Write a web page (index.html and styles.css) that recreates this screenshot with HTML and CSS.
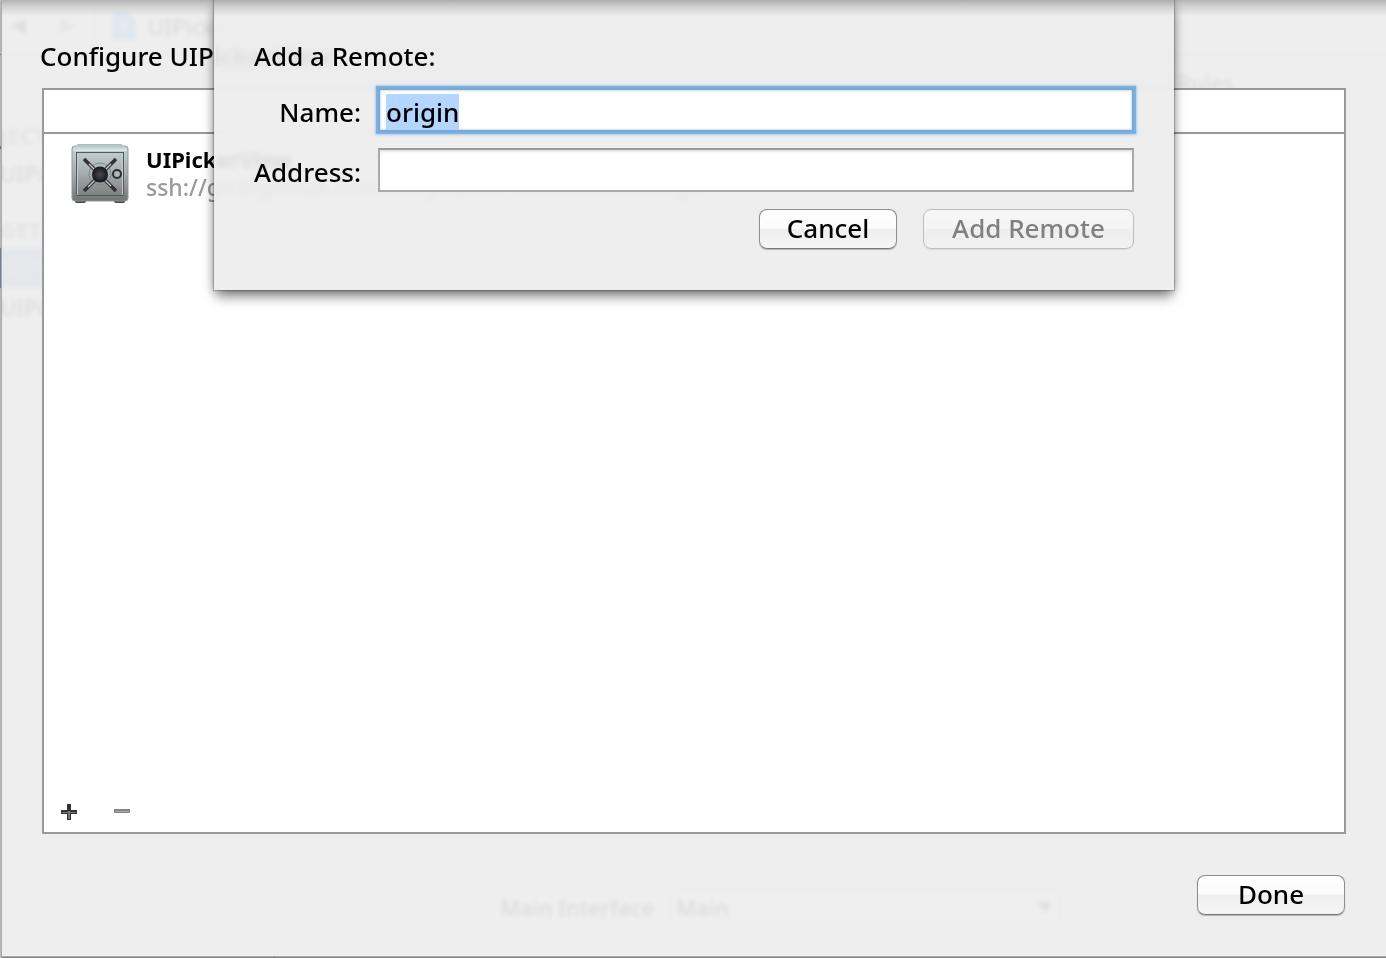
FILE: index.html
```html
<!DOCTYPE html>
<html lang="en">
<head>
<meta charset="utf-8">
<title>Configure UIPickerView</title>
<link rel="stylesheet" href="styles.css">
</head>
<body>
<div class="workspace" inert>
  <div class="toolbar">
    <span class="arrow back"></span>
    <span class="arrow forward"></span>
    <span class="divider"></span>
    <svg class="doc" viewBox="0 0 24 28" aria-hidden="true"><path fill="#4aa0f0" d="M0 0h15l9 9v19H0z"/><path fill="#d8ecff" d="M7 20l5-12 5 12h-2l-3-7-3 7z"/></svg>
    <span class="crumb">UIPicke</span>
  </div>
  <div class="panes">
    <div class="sidebar">
      <div class="group">JECT</div>
      <div class="entry">UIPi</div>
      <div class="group second">GETS</div>
      <div class="entry selected">UIPi</div>
      <div class="entry">UIPi</div>
    </div>
    <div class="editor">
      <div class="tabs">Rules</div>
      <div class="setting">
        <label for="main-interface">Main Interface</label>
        <div class="combo"><select id="main-interface"><option>Main</option></select></div>
      </div>
    </div>
  </div>
</div>

<main class="sheet">
  <h1 class="heading">Configure UIPickerView</h1>
  <section class="list">
    <div class="list-head"></div>
    <div class="repo">
      <svg class="safe" viewBox="0 0 60 62" aria-hidden="true">
        <defs>
          <linearGradient id="body" x1="0" y1="0" x2="0" y2="1"><stop offset="0" stop-color="#c6d6da"/><stop offset=".5" stop-color="#a5adaf"/><stop offset="1" stop-color="#737373"/></linearGradient>
          <linearGradient id="lid" x1="0" y1="0" x2="0" y2="1"><stop offset="0" stop-color="#a8b9bd"/><stop offset="1" stop-color="#dcebee"/></linearGradient>
          <radialGradient id="hub"><stop offset="0" stop-color="#4a4a55"/><stop offset="1" stop-color="#15151b"/></radialGradient>
        </defs>
        <path fill="#444" d="M5 56h11v2q0 2-3 2H8q-3 0-3-2zM44 56h11v2q0 2-3 2h-5q-3 0-3-2z"/>
        <rect x="2" y="3" width="56" height="55" rx="3" fill="url(#body)" stroke="#8f9799"/>
        <path fill="url(#lid)" d="M8 1h43l6 4v3H3V5z"/>
        <rect x="7.500" y="10.500" width="45" height="42" fill="none" stroke="#c4cacb"/>
        <rect x="6.500" y="9.500" width="47" height="43" fill="none" stroke="#54595a"/>
        <circle cx="30" cy="31" r="11" fill="none" stroke="#7f8690"/>
        <path d="M14 16l32 32M46 16L14 48" stroke="#303236" stroke-width="3.600"/>
        <path d="M19 21l22 22M41 21L18 44" stroke="#c6cacc" stroke-width="1.400"/>
        <circle cx="30" cy="31.500" r="8" fill="url(#hub)"/>
        <circle cx="47" cy="31" r="4" fill="#a9b8b8" stroke="#2c3030" stroke-width="2"/>
      </svg>
      <div class="repo-text">
        <div class="repo-name">UIPickerView</div>
        <div class="repo-url">ssh://git@github.com/lexgod/UIPickerView-test.git</div>
      </div>
    </div>
    <div class="list-foot">
      <button class="tool" type="button" aria-label="Add"><svg viewBox="0 0 16 16"><path fill="#333" d="M6 0h4v6h6v4h-6v6H6v-6H0V6h6z"/><path fill="#777" d="M7 7h2v8H7zM1 8h14v1H1z"/></svg></button>
      <button class="tool" type="button" aria-label="Remove"><svg viewBox="0 0 16 16"><path fill="#858585" d="M0 5h16v4H0z"/><path fill="#a8a8a8" d="M1 7h14v1H1z"/></svg></button>
    </div>
  </section>
  <div class="sheet-foot"><button class="btn done" type="button">Done</button></div>
</main>

<div class="dialog-layer">
  <form class="dialog" role="dialog" aria-labelledby="dialog-title">
    <h2 class="heading" id="dialog-title">Add a Remote:</h2>
    <div class="fields">
      <label for="remote-name">Name:</label>
      <input class="focused" id="remote-name" type="text" value="origin" autocomplete="off" spellcheck="false">
      <label for="remote-address">Address:</label>
      <input id="remote-address" type="text" autocomplete="off">
    </div>
    <div class="actions">
      <button class="btn cancel" type="button">Cancel</button>
      <button class="btn add" type="submit" disabled>Add Remote</button>
    </div>
  </form>
</div>
<script src="app.js"></script>
</body>
</html>
```
FILE: styles.css
```css
* { box-sizing: border-box; }

body {
  margin: 0;
  height: 100vh;
  position: relative;
  overflow: hidden;
  background: #e8e8e8;
  color: #000;
  font-family: "Noto Sans", "Open Sans", sans-serif;
  font-size: 26px;
  font-weight: 500;
  line-height: 34px;
}

button, input, select { font: inherit; color: inherit; }

/* Project window behind the sheets */
.workspace {
  height: 100%;
  display: flex;
  flex-direction: column;
  font-size: 22px;
  color: #222;
}

.toolbar {
  height: 55px;
  flex: none;
  display: flex;
  align-items: center;
  padding: 0 0 2px 10px;
  border-bottom: 1px solid #888;
}

.arrow { border: 8px solid transparent; }
.back { border-right: 16px solid #444; border-left: 0; margin-right: 34px; }
.forward { border-left: 16px solid #999; border-right: 0; margin-right: 18px; }
.divider { width: 2px; height: 40px; margin-right: 16px; background: #bbb; }
.doc { width: 24px; height: 28px; margin-right: 12px; }
.panes { flex: 1; display: flex; }

.sidebar {
  width: 275px;
  padding-top: 61px;
  border-right: 1px solid #bbb;
  line-height: 38px;
  overflow: hidden;
}

.group { font-weight: bold; color: #777; }
.group.second { margin-top: 16px; }
.entry { height: 40px; }
.entry.selected { background: #7f93bd; color: #9cacd0; }
.editor { flex: 1; display: flex; flex-direction: column; justify-content: space-between; }

.tabs {
  height: 58px;
  padding: 10px 152px 0 0;
  border-bottom: 1px solid #bbb;
  text-align: right;
}

.setting {
  display: flex;
  align-items: center;
  gap: 16px;
  padding: 0 0 34px 225px;
}

.combo { position: relative; width: 390px; }

.combo select {
  width: 100%;
  height: 34px;
  padding: 0 4px;
  appearance: none;
  border: 2px solid #bbb;
  background: #eee;
  line-height: 28px;
}

.combo::after {
  content: "";
  position: absolute;
  right: 8px;
  top: 12px;
  border: 7px solid transparent;
  border-top: 11px solid #444;
  border-bottom: 0;
}

/* Main sheet */
.sheet {
  position: absolute;
  inset: 0 0 2px 2px;
  display: flex;
  flex-direction: column;
  padding: 39px 41px 41px 40px;
  background: rgba(238, 238, 238, .91);
  backdrop-filter: blur(2px);
  box-shadow: 0 0 0 1px #aaa, 0 1px 2px 1px #555;
}

.sheet::before, .dialog::before {
  content: "";
  position: absolute;
  inset: 0 0 auto;
  height: 16px;
  background: linear-gradient(rgba(0, 0, 0, .25), rgba(0, 0, 0, .12) 40%, transparent);
}

.heading { margin: 0; font-size: 26px; line-height: 34px; font-weight: 500; }
.sheet > .heading { margin-left: -2px; }

.list {
  flex: 1;
  margin: 15px -1px 0 0;
  display: flex;
  flex-direction: column;
  background: #fff;
  border: 2px solid #999;
}

.list-head { height: 44px; border-bottom: 2px solid #999; }
.repo { flex: 1; display: flex; gap: 16px; padding: 9px 26px; }
.safe { width: 60px; height: 62px; }
.repo-text { padding-top: 2px; line-height: 28px; }
.repo-name { font-size: 22px; font-weight: bold; }
.repo-url { font-size: 23px; color: #999; }
.list-foot { display: flex; gap: 37px; padding: 0 17px 12px; }

.tool { display: block; padding: 0; border: 0; background: none; }
.tool svg { display: block; width: 16px; height: 16px; }

.sheet-foot { display: flex; justify-content: flex-end; margin-top: 41px; }

.btn {
  height: 40px;
  padding: 0 0 2px;
  border: 1px solid #8e8e8e;
  border-bottom-color: #777;
  border-radius: 8px;
  background: linear-gradient(#fff, #fbfbfb 48%, #efefef 50%, #f5f5f5);
  box-shadow: 0 1px 1px rgba(0, 0, 0, .25);
}

.btn:disabled {
  border-color: #bdbdbd;
  background: linear-gradient(#f7f7f7, #f4f4f4 48%, #eee 50%, #f1f1f1);
  box-shadow: 0 1px 1px rgba(0, 0, 0, .08);
  color: #808080;
}

.done { width: 148px; }

/* Remote dialog */
.dialog-layer {
  position: absolute;
  inset: 0 0 auto 2px;
  display: flex;
  justify-content: center;
}

.dialog {
  position: relative;
  width: 960px;
  padding: 39px 40px 41px;
  background: rgba(237, 237, 237, .92);
  backdrop-filter: blur(3px);
  box-shadow: 0 0 1px 1px rgba(0, 0, 0, .2), 0 0 10px rgba(0, 0, 0, .2), 0 8px 12px -2px rgba(0, 0, 0, .5);
}

.fields {
  display: grid;
  grid-template-columns: 107px 1fr;
  gap: 16px 17px;
  margin-top: 15px;
}

.fields label {
  display: flex;
  justify-content: flex-end;
  line-height: 48px;
  height: 44px;
  white-space: nowrap;
}

.fields input {
  width: 100%;
  height: 44px;
  padding: 3px 6px 0;
  border: 2px solid #aaa;
  border-top-color: #999;
  background: #fff;
  box-shadow: inset 0 2px 2px #e6e6e6;
  outline: 0;
}

.fields .focused {
  border-color: #7ba8d2;
  box-shadow: 0 0 0 2px #7fb0de, 0 0 2px 3px #a9cdee, inset 0 0 2px 1px #c9dff2;
}

.fields input::selection { background: #b4d5fe; color: #000; }

.actions {
  display: flex;
  justify-content: flex-end;
  gap: 26px;
  margin-top: 17px;
}

.cancel { width: 138px; }
.add { width: 211px; }
```
FILE: app.js
```js
const nameField = document.getElementById("remote-name");
nameField.focus();
nameField.select();
```
